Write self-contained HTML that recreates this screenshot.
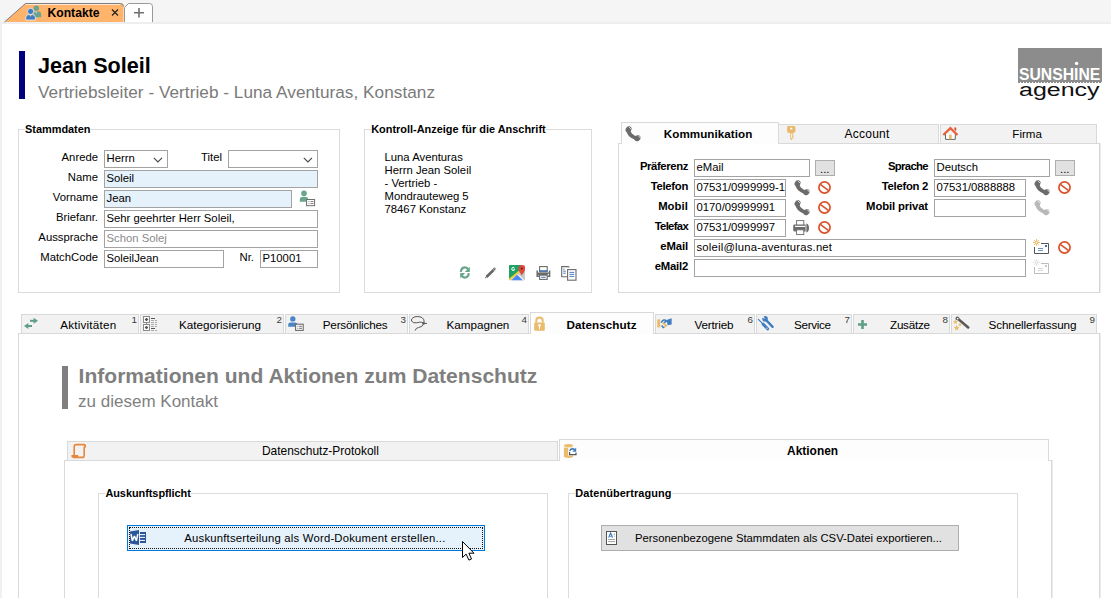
<!DOCTYPE html>
<html><head><meta charset="utf-8"><style>
html,body{margin:0;padding:0;}
body{width:1111px;height:598px;overflow:hidden;position:relative;background:#fff;font-family:"Liberation Sans", sans-serif;}
body > div, body > svg{position:absolute;box-sizing:border-box;}
</style></head><body>
<div style="left:0px;top:0px;width:1111px;height:22px;background:#f5f5f5;"></div>
<div style="left:0px;top:22px;width:1111px;height:2px;background:#eceef0;"></div>
<div style="left:0px;top:24px;width:2px;height:574px;background:#f0f0f0;"></div>
<svg style="left:0px;top:0px" width="160" height="24" viewBox="0 0 160 24">
<path d="M4.5,22 L25.5,3.5 L120.5,3.5 Q123.5,3.5 123.5,6.5 L123.5,22 Z" fill="#ffb36b"/>
<path d="M4.5,22 L25.5,3.5 L120.5,3.5 Q123.5,3.5 123.5,6.5" fill="none" stroke="#7d7d7d" stroke-width="1"/>
<path d="M26,4.5 L120,4.5" stroke="#fff" stroke-width="1" opacity="0.7"/>
<path d="M124.5,22 L124.5,7.5 L128.5,3.5 L149.5,3.5 Q152.5,3.5 152.5,6.5 L152.5,22" fill="#fff" stroke="#999" stroke-width="1"/>
<path d="M134,12.8 H144 M139,8 V17.6" stroke="#707070" stroke-width="1.6"/>
<path d="M112,9.5 L118,15.5 M118,9.5 L112,15.5" stroke="#222" stroke-width="1.2"/>
</svg>
<div style="left:47.5px;top:6.92px;font-size:12.15px;line-height:12.15px;font-weight:bold;color:#000;white-space:nowrap;">Kontakte</div>
<svg style="left:24px;top:4px" width="20" height="18" viewBox="0 0 20 18">
<circle cx="12.3" cy="4.3" r="2.7" fill="#6aa390"/>
<path d="M9.6,13.2 V10.4 Q9.6,7.4 12.3,7.4 Q15,7.4 15,7.4 Q17.2,7.6 17.2,10.4 V13.2 Z" fill="#6aa390"/>
<path d="M11.2,7.6 L12.3,9.6 L13.4,7.6 Z" fill="#fff" opacity="0.6"/>
<circle cx="6.6" cy="7.4" r="3.1" fill="#3f7cc0" stroke="#fff" stroke-width="0.7"/>
<path d="M1.8,16 V13.6 Q1.8,10.6 4.8,10.6 H8.4 Q11.4,10.6 11.4,13.6 V16 Z" fill="#3f7cc0" stroke="#fff" stroke-width="0.7"/>
<path d="M5.4,10.9 L6.6,12.8 L7.8,10.9 Z" fill="#ffb36b"/>
</svg>
<div style="left:19px;top:51px;width:6px;height:48px;background:#000080;"></div>
<div style="left:38px;top:54.52px;font-size:21.6px;line-height:21.6px;font-weight:bold;color:#000;white-space:nowrap;">Jean Soleil</div>
<div style="left:38px;top:84.44px;font-size:17.2px;line-height:17.2px;font-weight:normal;color:#7a7a7a;white-space:nowrap;letter-spacing:0.034px;">Vertriebsleiter - Vertrieb - Luna Aventuras, Konstanz</div>
<div style="left:18px;top:129px;width:322px;height:164px;border:1px solid #dcdcdc;"></div>
<div style="left:25px;top:128px;width:66px;height:3px;background:#fff;"></div>
<div style="left:25px;top:123.75px;font-size:10.93px;line-height:10.93px;font-weight:bold;color:#000;white-space:nowrap;letter-spacing:-0.007px;">Stammdaten</div>
<div style="right:1013px;top:152.23px;font-size:11.3px;line-height:11.3px;font-weight:normal;color:#000;white-space:nowrap;text-align:right;">Anrede</div>
<div style="left:104px;top:150px;width:64px;height:18px;border:1px solid #a3a3a3;background:#fff;"></div>
<div style="left:106.5px;top:153.33px;font-size:11.3px;line-height:11.3px;font-weight:normal;color:#000;white-space:nowrap;">Herrn</div>
<svg style="left:153px;top:157px" width="10" height="6" viewBox="0 0 10 6"><path d="M0.8,0.8 L4.9,4.9 L9,0.8" fill="none" stroke="#444" stroke-width="1.1"/></svg>
<div style="right:889px;top:152.23px;font-size:11.3px;line-height:11.3px;font-weight:normal;color:#000;white-space:nowrap;text-align:right;">Titel</div>
<div style="left:228px;top:150px;width:90px;height:18px;border:1px solid #a3a3a3;background:#fff;"></div>
<svg style="left:303px;top:157px" width="10" height="6" viewBox="0 0 10 6"><path d="M0.8,0.8 L4.9,4.9 L9,0.8" fill="none" stroke="#444" stroke-width="1.1"/></svg>
<div style="right:1013px;top:172.23px;font-size:11.3px;line-height:11.3px;font-weight:normal;color:#000;white-space:nowrap;text-align:right;">Name</div>
<div style="left:104px;top:170px;width:214px;height:18px;border:1px solid #a3a3a3;background:#e5f1fb;"></div>
<div style="left:106.5px;top:173.33px;font-size:11.3px;line-height:11.3px;font-weight:normal;color:#000;white-space:nowrap;">Soleil</div>
<div style="right:1013px;top:192.23px;font-size:11.3px;line-height:11.3px;font-weight:normal;color:#000;white-space:nowrap;text-align:right;">Vorname</div>
<div style="left:104px;top:190px;width:188px;height:18px;border:1px solid #a3a3a3;background:#e5f1fb;"></div>
<div style="left:106.5px;top:193.33px;font-size:11.3px;line-height:11.3px;font-weight:normal;color:#000;white-space:nowrap;">Jean</div>
<svg style="left:297px;top:189px" width="20" height="19" viewBox="0 0 20 19">
<circle cx="7" cy="4.4" r="2.8" fill="#6aa68c"/>
<path d="M2.8,12.8 L2.8,10 Q2.8,7.9 5,7.9 L9,7.9 Q11.2,7.9 11.2,10 L11.2,12.8 Z" fill="#6aa68c"/>
<rect x="9.6" y="10.5" width="8" height="6.2" fill="#fff" stroke="#6e6e6e" stroke-width="1"/>
<path d="M11.5,12.6 h0.9 M13.5,12.6 h3 M11.5,14.6 h0.9 M13.5,14.6 h3" stroke="#6e6e6e" stroke-width="0.9"/>
</svg>
<div style="right:1013px;top:212.23px;font-size:11.3px;line-height:11.3px;font-weight:normal;color:#000;white-space:nowrap;text-align:right;">Briefanr.</div>
<div style="left:104px;top:210px;width:214px;height:18px;border:1px solid #a3a3a3;background:#fff;"></div>
<div style="left:106.5px;top:213.33px;font-size:11.3px;line-height:11.3px;font-weight:normal;color:#000;white-space:nowrap;">Sehr geehrter Herr Soleil,</div>
<div style="right:1013px;top:232.23px;font-size:11.3px;line-height:11.3px;font-weight:normal;color:#000;white-space:nowrap;text-align:right;">Aussprache</div>
<div style="left:104px;top:230px;width:214px;height:18px;border:1px solid #a3a3a3;background:#fff;"></div>
<div style="left:106.5px;top:233.33px;font-size:11.3px;line-height:11.3px;font-weight:normal;color:#8a8a8a;white-space:nowrap;">Schon Solej</div>
<div style="right:1013px;top:252.23px;font-size:11.3px;line-height:11.3px;font-weight:normal;color:#000;white-space:nowrap;text-align:right;">MatchCode</div>
<div style="left:104px;top:250px;width:120px;height:18px;border:1px solid #a3a3a3;background:#fff;"></div>
<div style="left:106.5px;top:253.33px;font-size:11.3px;line-height:11.3px;font-weight:normal;color:#000;white-space:nowrap;">SoleilJean</div>
<div style="right:857px;top:252.23px;font-size:11.3px;line-height:11.3px;font-weight:normal;color:#000;white-space:nowrap;text-align:right;">Nr.</div>
<div style="left:260px;top:250px;width:58px;height:18px;border:1px solid #a3a3a3;background:#fff;"></div>
<div style="left:262.5px;top:253.33px;font-size:11.3px;line-height:11.3px;font-weight:normal;color:#000;white-space:nowrap;">P10001</div>
<div style="left:364px;top:129px;width:228px;height:164px;border:1px solid #dcdcdc;"></div>
<div style="left:371.2px;top:128px;width:175px;height:3px;background:#fff;"></div>
<div style="left:371.2px;top:123.75px;font-size:10.93px;line-height:10.93px;font-weight:bold;color:#000;white-space:nowrap;letter-spacing:0.004px;">Kontroll-Anzeige für die Anschrift</div>
<svg style="left:459px;top:266px" width="12" height="13" viewBox="0 0 12 13"><path d="M1.8,5.8 Q2.4,1.3 6.2,1.3 Q8.2,1.3 9.4,3.6" fill="none" stroke="#6aa68c" stroke-width="2.2"/>
<path d="M10.8,0.8 V5.9 H5.8 Z" fill="#6aa68c"/>
<path d="M9.8,7.2 Q9.4,11.6 5.8,11.6 Q3.8,11.6 2.6,9.4" fill="none" stroke="#6aa68c" stroke-width="2.2"/>
<path d="M1.2,7.1 H6.2 L1.2,12.2 Z" fill="#6aa68c"/></svg>
<svg style="left:484px;top:266px" width="14" height="13" viewBox="0 0 14 13"><path d="M2.4,11 L11.4,2.2" stroke="#666" stroke-width="2.6"/>
<path d="M1,12.2 L2.8,10.6" stroke="#666" stroke-width="1"/>
<path d="M9.2,3.6 L10.8,5.2 M10.4,2.4 L12,4" stroke="#fff" stroke-width="0.7"/></svg>
<svg style="left:509px;top:265px" width="16" height="16" viewBox="0 0 16 16"><rect x="0" y="0" width="16" height="15.2" rx="1" fill="#c9c9c9"/>
<path d="M1,0 H13 L10.4,6.4 L0,14.6 V1 Q0,0 1,0 Z" fill="#1ea362"/>
<path d="M0,14.8 L10.6,6.2" stroke="#f3d036" stroke-width="1.6"/>
<path d="M2.6,15.2 L8.4,9.4 L14.2,15.2 Z" fill="#4a89f3"/>
<path d="M8.6,9.4 L14.6,15.2" stroke="#f8f8f8" stroke-width="1.1"/>
<path d="M12.8,0 Q9.4,0 9.4,3.6 Q9.4,6 12.8,10.4 Q16.2,6 16.2,3.6 Q16.2,0 12.8,0 Z" fill="#dd4b3e"/>
<circle cx="12.8" cy="3.6" r="1.1" fill="#7d1a12"/>
<path d="M5.6,3.2 Q5,2.2 4,2.4 Q2.8,2.6 2.8,4 Q2.8,5.6 4.2,5.6 Q5.4,5.6 5.6,4.4 H4.4" fill="none" stroke="#fff" stroke-width="1"/></svg>
<svg style="left:536px;top:265.6px" width="16" height="15" viewBox="0 0 16 15"><g transform="scale(1.0)"><rect x="3.6" y="0.6" width="7.6" height="5.2" fill="#fff" stroke="#6b6b6b" stroke-width="1.1"/>
<rect x="3.2" y="4.2" width="8.4" height="1.5" fill="#3a72b4"/>
<path d="M1.2,4.4 V10.2 H3.4 M11.4,10.2 H13.6 V4.4" fill="none" stroke="#6b6b6b" stroke-width="1.5"/>
<path d="M1.2,7.8 H13.6" stroke="#6b6b6b" stroke-width="2.6"/>
<circle cx="12.3" cy="8.5" r="0.7" fill="#fff"/>
<rect x="3.6" y="9.2" width="7.6" height="4.2" fill="#fff" stroke="#6b6b6b" stroke-width="1.1"/>
<rect x="5.2" y="10.8" width="4.4" height="1" fill="#3a72b4"/></g></svg>
<svg style="left:561px;top:266px" width="16" height="15" viewBox="0 0 16 15"><path d="M7.4,10.8 H0.7 V0.6 H7.2 L8.4,1.4" fill="none" stroke="#6b6b6b" stroke-width="1.1"/>
<path d="M2.2,3.2 h1.4 M2.2,5.2 h2.6 M2.2,7.2 h2.6" stroke="#3a72b4" stroke-width="0.9"/>
<rect x="6.6" y="3.6" width="8.4" height="10.6" fill="#fff" stroke="#6b6b6b" stroke-width="1.1"/>
<path d="M8.4,6.4 h4.8 M8.4,8.4 h4.8 M8.4,10.4 h4.8" stroke="#3a72b4" stroke-width="0.9"/></svg>
<div style="left:384.5px;top:152.13px;font-size:11.3px;line-height:11.3px;font-weight:normal;color:#000;white-space:nowrap;">Luna Aventuras</div>
<div style="left:384.5px;top:165.03px;font-size:11.3px;line-height:11.3px;font-weight:normal;color:#000;white-space:nowrap;">Herrn Jean Soleil</div>
<div style="left:384.5px;top:177.93px;font-size:11.3px;line-height:11.3px;font-weight:normal;color:#000;white-space:nowrap;">- Vertrieb -</div>
<div style="left:384.5px;top:190.83px;font-size:11.3px;line-height:11.3px;font-weight:normal;color:#000;white-space:nowrap;">Mondrauteweg 5</div>
<div style="left:384.5px;top:203.73px;font-size:11.3px;line-height:11.3px;font-weight:normal;color:#000;white-space:nowrap;">78467 Konstanz</div>
<div style="left:618px;top:143px;width:482px;height:150px;border:1px solid #d9d9d9;border-right-color:#d5d5d5;"></div>
<div style="left:1100px;top:143px;width:1px;height:150px;background:#ececec;"></div>
<div style="left:779px;top:124px;width:160px;height:20px;background:#f2f2f2;border-top:1px solid #d9d9d9;border-right:1px solid #d9d9d9;border-bottom:1px solid #d9d9d9;"></div>
<div style="left:940px;top:124px;width:157px;height:20px;background:#f2f2f2;border:1px solid #d9d9d9;"></div>
<div style="left:621px;top:122px;width:158px;height:22px;background:#fdfdfd;border:1px solid #d9d9d9;border-bottom:none;"></div>
<svg style="left:625px;top:125.5px" width="16" height="16" viewBox="0 0 16 16"><path d="M3.4,3.6 Q3.2,9.6 12.2,12.6" fill="none" stroke="#6b6b6b" stroke-width="4.0" stroke-linecap="round"/>
<ellipse cx="3.6" cy="3.4" rx="3.3" ry="2.8" transform="rotate(-55 3.6 3.4)" fill="#6b6b6b"/>
<ellipse cx="12.4" cy="12.2" rx="3.3" ry="2.8" transform="rotate(-35 12.4 12.2)" fill="#6b6b6b"/>
<path d="M3.6,0.6 L6.6,3.6 M13.2,9.4 L15.6,12.4" stroke="#fff" stroke-width="0.8" opacity="0.9"/></svg>
<div style="left:663.8px;top:127.94px;font-size:11.65px;line-height:11.65px;font-weight:bold;color:#000;white-space:nowrap;letter-spacing:0.046px;">Kommunikation</div>
<svg style="left:786px;top:125px" width="10" height="17" viewBox="0 0 10 17"><path d="M2.2,1 H8 Q9.4,1 9.4,2.4 V6.3 Q9.4,7.5 8,7.8 L6.6,8.3 V13.6 L5.4,15.3 L4.2,13.6 V8.3 L2.6,7.8 Q1.1,7.5 1.1,6.2 V2.4 Q1.1,1 2.2,1 Z" fill="#e9b96a"/>
<rect x="4.3" y="2.7" width="2" height="1.7" fill="#fff"/>
<path d="M5.4,8.5 V13.2" stroke="#fff" stroke-width="0.8"/>
<path d="M6.6,9.8 h1.2 M6.6,11.4 h1.2 M6.6,12.9 h1.0" stroke="#e9b96a" stroke-width="0.9"/></svg>
<div style="left:844.4px;top:127.64px;font-size:12.0px;line-height:12.0px;font-weight:normal;color:#000;white-space:nowrap;letter-spacing:0.273px;">Account</div>
<svg style="left:942px;top:126px" width="17" height="15" viewBox="0 0 17 15"><path d="M3.5,8 V13.4 H13.3 V8" fill="#fff" stroke="#666" stroke-width="1"/>
<rect x="7.1" y="8.6" width="2.6" height="4.6" fill="#e9b96a"/>
<path d="M1.3,9 L8.4,2.2 L15.5,9" fill="none" stroke="#e8603c" stroke-width="2.3"/>
<path d="M12.4,1.6 H14.2 V5.2 L12.4,3.6 Z" fill="#d34a1e"/></svg>
<div style="left:1012.3px;top:127.98px;font-size:11.6px;line-height:11.6px;font-weight:normal;color:#000;white-space:nowrap;">Firma</div>
<div style="right:423px;top:161.43px;font-size:11.3px;line-height:11.3px;font-weight:bold;color:#000;white-space:nowrap;text-align:right;letter-spacing:-0.375px;">Präferenz</div>
<div style="left:694px;top:159px;width:116px;height:18px;border:1px solid #a3a3a3;background:#fff;"></div>
<div style="left:696.5px;top:162.33px;font-size:11.3px;line-height:11.3px;font-weight:normal;color:#000;white-space:nowrap;">eMail</div>
<div style="left:815px;top:160px;width:20px;height:16px;border:1px solid #adadad;background:#e1e1e1;"></div>
<div style="left:820px;top:164.03px;font-size:11.3px;line-height:11.3px;font-weight:normal;color:#000;white-space:nowrap;">...</div>
<div style="right:423px;top:181.43px;font-size:11.3px;line-height:11.3px;font-weight:bold;color:#000;white-space:nowrap;text-align:right;letter-spacing:-0.307px;">Telefon</div>
<div style="left:694px;top:179px;width:92px;height:18px;border:1px solid #a3a3a3;background:#fff;"></div>
<div style="left:696.5px;top:182.33px;font-size:11.3px;line-height:11.3px;font-weight:normal;color:#000;white-space:nowrap;">07531/0999999-1</div>
<svg style="left:794px;top:179.5px" width="16" height="16" viewBox="0 0 16 16"><path d="M3.4,3.6 Q3.2,9.6 12.2,12.6" fill="none" stroke="#6b6b6b" stroke-width="4.0" stroke-linecap="round"/>
<ellipse cx="3.6" cy="3.4" rx="3.3" ry="2.8" transform="rotate(-55 3.6 3.4)" fill="#6b6b6b"/>
<ellipse cx="12.4" cy="12.2" rx="3.3" ry="2.8" transform="rotate(-35 12.4 12.2)" fill="#6b6b6b"/>
<path d="M3.6,0.6 L6.6,3.6 M13.2,9.4 L15.6,12.4" stroke="#fff" stroke-width="0.8" opacity="0.9"/></svg>
<svg style="left:817px;top:180px" width="15" height="15" viewBox="0 0 15 15"><circle cx="7.5" cy="7.5" r="5.6" fill="none" stroke="#d9532c" stroke-width="1.7"/><path d="M3.6,4.6 L11.4,10.4" stroke="#d9532c" stroke-width="1.7"/></svg>
<div style="right:423px;top:201.43px;font-size:11.3px;line-height:11.3px;font-weight:bold;color:#000;white-space:nowrap;text-align:right;letter-spacing:0.075px;">Mobil</div>
<div style="left:694px;top:199px;width:92px;height:18px;border:1px solid #a3a3a3;background:#fff;"></div>
<div style="left:696.5px;top:202.33px;font-size:11.3px;line-height:11.3px;font-weight:normal;color:#000;white-space:nowrap;">0170/09999991</div>
<svg style="left:794px;top:199.5px" width="16" height="16" viewBox="0 0 16 16"><path d="M3.4,3.6 Q3.2,9.6 12.2,12.6" fill="none" stroke="#6b6b6b" stroke-width="4.0" stroke-linecap="round"/>
<ellipse cx="3.6" cy="3.4" rx="3.3" ry="2.8" transform="rotate(-55 3.6 3.4)" fill="#6b6b6b"/>
<ellipse cx="12.4" cy="12.2" rx="3.3" ry="2.8" transform="rotate(-35 12.4 12.2)" fill="#6b6b6b"/>
<path d="M3.6,0.6 L6.6,3.6 M13.2,9.4 L15.6,12.4" stroke="#fff" stroke-width="0.8" opacity="0.9"/></svg>
<svg style="left:817px;top:200px" width="15" height="15" viewBox="0 0 15 15"><circle cx="7.5" cy="7.5" r="5.6" fill="none" stroke="#d9532c" stroke-width="1.7"/><path d="M3.6,4.6 L11.4,10.4" stroke="#d9532c" stroke-width="1.7"/></svg>
<div style="right:423px;top:221.43px;font-size:11.3px;line-height:11.3px;font-weight:bold;color:#000;white-space:nowrap;text-align:right;letter-spacing:-0.682px;">Telefax</div>
<div style="left:694px;top:219px;width:92px;height:18px;border:1px solid #a3a3a3;background:#fff;"></div>
<div style="left:696.5px;top:222.33px;font-size:11.3px;line-height:11.3px;font-weight:normal;color:#000;white-space:nowrap;">07531/0999997</div>
<svg style="left:817px;top:220px" width="15" height="15" viewBox="0 0 15 15"><circle cx="7.5" cy="7.5" r="5.6" fill="none" stroke="#d9532c" stroke-width="1.7"/><path d="M3.6,4.6 L11.4,10.4" stroke="#d9532c" stroke-width="1.7"/></svg>
<svg style="left:792px;top:219px" width="18" height="17" viewBox="0 0 18 17"><rect x="4.6" y="1.6" width="7.2" height="5" fill="#fff" stroke="#6b6b6b" stroke-width="0.9"/>
<path d="M2.6,5.6 H13.6 V12.4 H2.6 Q1.2,12.4 1.2,11 V7 Q1.2,5.6 2.6,5.6 Z" fill="#6b6b6b"/>
<rect x="3" y="6.8" width="10.2" height="1.2" fill="#fff"/>
<path d="M14.4,4.6 Q17,5.4 17,9 Q17,12.6 14.4,13.6 Z" fill="#6b6b6b"/>
<rect x="4.6" y="10.8" width="7.2" height="4.8" fill="#fff" stroke="#6b6b6b" stroke-width="0.9"/></svg>
<div style="right:423px;top:241.43px;font-size:11.3px;line-height:11.3px;font-weight:bold;color:#000;white-space:nowrap;text-align:right;letter-spacing:-0.116px;">eMail</div>
<div style="left:694px;top:239px;width:332px;height:18px;border:1px solid #a3a3a3;background:#fff;"></div>
<div style="left:696.5px;top:242.33px;font-size:11.3px;line-height:11.3px;font-weight:normal;color:#000;white-space:nowrap;letter-spacing:0.196px;">soleil@luna-aventuras.net</div>
<svg style="left:1057px;top:240px" width="15" height="15" viewBox="0 0 15 15"><circle cx="7.5" cy="7.5" r="5.6" fill="none" stroke="#d9532c" stroke-width="1.7"/><path d="M3.6,4.6 L11.4,10.4" stroke="#d9532c" stroke-width="1.7"/></svg>
<div style="right:423px;top:261.43px;font-size:11.3px;line-height:11.3px;font-weight:bold;color:#000;white-space:nowrap;text-align:right;letter-spacing:-0.209px;">eMail2</div>
<div style="left:694px;top:259px;width:332px;height:18px;border:1px solid #a3a3a3;background:#fff;"></div>
<svg style="left:1033px;top:239px" width="17" height="16" viewBox="0 0 17 16"><path d="M8,4.5 H15.5 V14.5 H1.5 V8" fill="none" stroke="#555" stroke-width="1"/>
<rect x="12" y="6" width="2" height="2" fill="#3a6fb0"/>
<path d="M5,9.5 h5 M5,11.5 h5" stroke="#3a6fb0" stroke-width="1" opacity="0.75"/>
<circle cx="3.5" cy="3.5" r="1.3" fill="none" stroke="#f0a83c" stroke-width="1"/>
<path d="M3.5,0.2 V1.8 M3.5,5.2 V6.8 M0.2,3.5 H1.8 M5.2,3.5 H6.8 M1.2,1.2 L2.2,2.2 M4.8,4.8 L5.8,5.8 M5.8,1.2 L4.8,2.2 M2.2,4.8 L1.2,5.8" stroke="#f0a83c" stroke-width="0.9"/></svg>
<svg style="left:1033px;top:259px" width="17" height="16" viewBox="0 0 17 16"><path d="M8,4.5 H15.5 V14.5 H1.5 V8" fill="none" stroke="#bdbdbd" stroke-width="1"/>
<rect x="12" y="6" width="2" height="2" fill="#c8c8c8"/>
<path d="M5,9.5 h5 M5,11.5 h5" stroke="#c8c8c8" stroke-width="1" opacity="0.75"/>
<circle cx="3.5" cy="3.5" r="1.3" fill="none" stroke="#dedede" stroke-width="1"/>
<path d="M3.5,0.2 V1.8 M3.5,5.2 V6.8 M0.2,3.5 H1.8 M5.2,3.5 H6.8 M1.2,1.2 L2.2,2.2 M4.8,4.8 L5.8,5.8 M5.8,1.2 L4.8,2.2 M2.2,4.8 L1.2,5.8" stroke="#dedede" stroke-width="0.9"/></svg>
<div style="right:183px;top:161.43px;font-size:11.3px;line-height:11.3px;font-weight:bold;color:#000;white-space:nowrap;text-align:right;letter-spacing:-0.649px;">Sprache</div>
<div style="left:934px;top:159px;width:116px;height:18px;border:1px solid #a3a3a3;background:#fff;"></div>
<div style="left:936.5px;top:162.33px;font-size:11.3px;line-height:11.3px;font-weight:normal;color:#000;white-space:nowrap;">Deutsch</div>
<div style="left:1055px;top:160px;width:20px;height:16px;border:1px solid #adadad;background:#e1e1e1;"></div>
<div style="left:1060px;top:164.03px;font-size:11.3px;line-height:11.3px;font-weight:normal;color:#000;white-space:nowrap;">...</div>
<div style="right:183px;top:181.43px;font-size:11.3px;line-height:11.3px;font-weight:bold;color:#000;white-space:nowrap;text-align:right;letter-spacing:-0.283px;">Telefon 2</div>
<div style="left:934px;top:179px;width:92px;height:18px;border:1px solid #a3a3a3;background:#fff;"></div>
<div style="left:936.5px;top:182.33px;font-size:11.3px;line-height:11.3px;font-weight:normal;color:#000;white-space:nowrap;">07531/0888888</div>
<svg style="left:1034px;top:179.5px" width="16" height="16" viewBox="0 0 16 16"><path d="M3.4,3.6 Q3.2,9.6 12.2,12.6" fill="none" stroke="#6b6b6b" stroke-width="4.0" stroke-linecap="round"/>
<ellipse cx="3.6" cy="3.4" rx="3.3" ry="2.8" transform="rotate(-55 3.6 3.4)" fill="#6b6b6b"/>
<ellipse cx="12.4" cy="12.2" rx="3.3" ry="2.8" transform="rotate(-35 12.4 12.2)" fill="#6b6b6b"/>
<path d="M3.6,0.6 L6.6,3.6 M13.2,9.4 L15.6,12.4" stroke="#fff" stroke-width="0.8" opacity="0.9"/></svg>
<svg style="left:1057px;top:180px" width="15" height="15" viewBox="0 0 15 15"><circle cx="7.5" cy="7.5" r="5.6" fill="none" stroke="#d9532c" stroke-width="1.7"/><path d="M3.6,4.6 L11.4,10.4" stroke="#d9532c" stroke-width="1.7"/></svg>
<div style="right:183px;top:201.43px;font-size:11.3px;line-height:11.3px;font-weight:bold;color:#000;white-space:nowrap;text-align:right;letter-spacing:-0.126px;">Mobil privat</div>
<div style="left:934px;top:199px;width:92px;height:18px;border:1px solid #a3a3a3;background:#fff;"></div>
<svg style="left:1034px;top:199.5px" width="16" height="16" viewBox="0 0 16 16"><path d="M3.4,3.6 Q3.2,9.6 12.2,12.6" fill="none" stroke="#b8b8b8" stroke-width="4.0" stroke-linecap="round"/>
<ellipse cx="3.6" cy="3.4" rx="3.3" ry="2.8" transform="rotate(-55 3.6 3.4)" fill="#b8b8b8"/>
<ellipse cx="12.4" cy="12.2" rx="3.3" ry="2.8" transform="rotate(-35 12.4 12.2)" fill="#b8b8b8"/>
<path d="M3.6,0.6 L6.6,3.6 M13.2,9.4 L15.6,12.4" stroke="#fff" stroke-width="0.8" opacity="0.9"/></svg>
<div style="left:18px;top:333px;width:1082px;height:300px;border:1px solid #d9d9d9;"></div>
<div style="left:1100px;top:333px;width:1px;height:265px;background:#ececec;"></div>
<div style="left:21px;top:314px;width:118px;height:20px;background:#f2f2f2;border:1px solid #d9d9d9;"></div>
<div style="left:60.2px;top:318.50px;font-size:11.7px;line-height:11.7px;font-weight:normal;color:#000;white-space:nowrap;letter-spacing:0.208px;">Aktivitäten</div>
<div style="left:131.6px;top:314.90px;font-size:9.8px;line-height:9.8px;font-weight:normal;color:#3a3a3a;white-space:nowrap;">1</div>
<div style="left:140px;top:314px;width:144px;height:20px;background:#f2f2f2;border:1px solid #d9d9d9;"></div>
<div style="left:179px;top:318.50px;font-size:11.7px;line-height:11.7px;font-weight:normal;color:#000;white-space:nowrap;letter-spacing:0.009px;">Kategorisierung</div>
<div style="left:276.6px;top:314.90px;font-size:9.8px;line-height:9.8px;font-weight:normal;color:#3a3a3a;white-space:nowrap;">2</div>
<div style="left:285px;top:314px;width:123px;height:20px;background:#f2f2f2;border:1px solid #d9d9d9;"></div>
<div style="left:322.7px;top:318.50px;font-size:11.7px;line-height:11.7px;font-weight:normal;color:#000;white-space:nowrap;letter-spacing:-0.175px;">Persönliches</div>
<div style="left:400.6px;top:314.90px;font-size:9.8px;line-height:9.8px;font-weight:normal;color:#3a3a3a;white-space:nowrap;">3</div>
<div style="left:409px;top:314px;width:120px;height:20px;background:#f2f2f2;border:1px solid #d9d9d9;"></div>
<div style="left:446.4px;top:318.50px;font-size:11.7px;line-height:11.7px;font-weight:normal;color:#000;white-space:nowrap;letter-spacing:-0.006px;">Kampagnen</div>
<div style="left:521.6px;top:314.90px;font-size:9.8px;line-height:9.8px;font-weight:normal;color:#3a3a3a;white-space:nowrap;">4</div>
<div style="left:530px;top:312px;width:124px;height:22px;background:#fdfdfd;border:1px solid #d9d9d9;border-bottom:none;"></div>
<div style="left:566.5px;top:318.50px;font-size:11.7px;line-height:11.7px;font-weight:bold;color:#000;white-space:nowrap;letter-spacing:0.050px;">Datenschutz</div>
<div style="left:531px;top:333px;width:122px;height:1px;background:#fdfdfd;"></div>
<div style="left:655px;top:314px;width:100px;height:20px;background:#f2f2f2;border:1px solid #d9d9d9;"></div>
<div style="left:694.5px;top:318.50px;font-size:11.7px;line-height:11.7px;font-weight:normal;color:#000;white-space:nowrap;letter-spacing:-0.183px;">Vertrieb</div>
<div style="left:747.6px;top:314.90px;font-size:9.8px;line-height:9.8px;font-weight:normal;color:#3a3a3a;white-space:nowrap;">6</div>
<div style="left:756px;top:314px;width:96px;height:20px;background:#f2f2f2;border:1px solid #d9d9d9;"></div>
<div style="left:794.1px;top:318.50px;font-size:11.7px;line-height:11.7px;font-weight:normal;color:#000;white-space:nowrap;letter-spacing:-0.331px;">Service</div>
<div style="left:844.6px;top:314.90px;font-size:9.8px;line-height:9.8px;font-weight:normal;color:#3a3a3a;white-space:nowrap;">7</div>
<div style="left:853px;top:314px;width:97px;height:20px;background:#f2f2f2;border:1px solid #d9d9d9;"></div>
<div style="left:890px;top:318.50px;font-size:11.7px;line-height:11.7px;font-weight:normal;color:#000;white-space:nowrap;letter-spacing:-0.263px;">Zusätze</div>
<div style="left:942.6px;top:314.90px;font-size:9.8px;line-height:9.8px;font-weight:normal;color:#3a3a3a;white-space:nowrap;">8</div>
<div style="left:951px;top:314px;width:146px;height:20px;background:#f2f2f2;border:1px solid #d9d9d9;"></div>
<div style="left:988.5px;top:318.50px;font-size:11.7px;line-height:11.7px;font-weight:normal;color:#000;white-space:nowrap;letter-spacing:-0.111px;">Schnellerfassung</div>
<div style="left:1089.6px;top:314.90px;font-size:9.8px;line-height:9.8px;font-weight:normal;color:#3a3a3a;white-space:nowrap;">9</div>
<svg style="left:23px;top:317px" width="16" height="13" viewBox="0 0 16 13"><path d="M7,3.8 H12" stroke="#5e9e85" stroke-width="2"/><path d="M10.6,0.8 L15,3.8 L10.6,6.8 Z" fill="#5e9e85"/>
<path d="M9,9 H4.4" stroke="#5e9e85" stroke-width="2"/><path d="M5.4,6 L1,9 L5.4,12 Z" fill="#5e9e85"/></svg>
<svg style="left:142px;top:315px" width="17" height="17" viewBox="0 0 17 17"><rect x="1.5" y="1.5" width="6" height="6" fill="#fff" stroke="#8a8a8a" stroke-width="1"/>
<rect x="1.5" y="9.5" width="6" height="6" fill="#fff" stroke="#8a8a8a" stroke-width="1"/>
<path d="M4.5,7.5 V9.5" stroke="#8a8a8a" stroke-width="1"/>
<path d="M2.9,4.5 h3.2 M4.5,2.9 v3.2 M2.9,12.5 h3.2 M4.5,10.9 v3.2" stroke="#555" stroke-width="1.3"/>
<path d="M9,3.5 h4 M9,13.5 h4" stroke="#555" stroke-width="1"/>
<path d="M9,5.5 h3 M13,5.5 h2 M9,7.5 h3 M13,7.5 h2 M9,9.5 h3 M13,9.5 h2 M9,11.5 h3 M13,11.5 h2 M9,15.5 h3 M13,15.5 h2" stroke="#aaa" stroke-width="1"/></svg>
<svg style="left:287px;top:315px" width="17" height="17" viewBox="0 0 17 17"><circle cx="5.8" cy="3.9" r="2.7" fill="#4a86c5"/>
<path d="M1.2,11.8 V9.8 Q1.2,7.4 3.4,7.4 L8.2,7.4 Q10.4,7.4 10.4,9.8 V11.8 Z" fill="#4a86c5"/>
<rect x="8.6" y="9.2" width="7.6" height="6.2" fill="#fff" stroke="#6b6b6b" stroke-width="1.1"/>
<path d="M10.4,11.3 h0.9 M12.2,11.3 h2.6 M10.4,13.3 h0.9 M12.2,13.3 h2.6" stroke="#555" stroke-width="0.9"/></svg>
<svg style="left:410px;top:315px" width="18" height="17" viewBox="0 0 18 17"><path d="M13.8,8.4 Q15.2,3.2 10,1.8 Q4,0.8 1.6,4 Q0.6,6.6 3.6,7.6 Q6.4,8.2 9.4,7.2 Q12,6.8 13.8,8.4 Q12.6,12.2 8.4,12.6 Q6,12.8 5,15.6 M13.6,8.4 L17,8.4" fill="none" stroke="#555" stroke-width="1"/>
<circle cx="13.6" cy="8.4" r="1.2" fill="#555"/></svg>
<svg style="left:533px;top:316px" width="13" height="16" viewBox="0 0 13 16"><path d="M3.3,6.6 V4.6 Q3.3,1.4 6.5,1.4 Q9.7,1.4 9.7,4.6 V6.6" fill="none" stroke="#e9bb6b" stroke-width="2"/>
<rect x="1.2" y="6.4" width="10.6" height="8.4" rx="1.2" fill="#e9bb6b"/>
<circle cx="6.5" cy="9.4" r="1.3" fill="#fff"/><rect x="6" y="9.6" width="1" height="3.6" fill="#fff"/></svg>
<svg style="left:656px;top:317px" width="17" height="13" viewBox="0 0 17 13"><rect x="1.2" y="2.4" width="3" height="8" fill="#e9bb6b"/>
<path d="M5.2,5.6 Q7.5,1.4 10.6,4 L7.6,6.2" fill="none" stroke="#3f7cc0" stroke-width="1.6"/>
<path d="M6.8,6 L10.2,8.6 L8.2,10.4" fill="none" stroke="#e9bb6b" stroke-width="1.8"/>
<path d="M5.6,8.4 L7.8,11" stroke="#3f7cc0" stroke-width="1.6"/>
<path d="M10.6,3 L15.6,1.2 V7.4 L11.6,8.2 Z" fill="#3f7cc0"/></svg>
<svg style="left:757px;top:315px" width="18" height="17" viewBox="0 0 18 17">
<path d="M9.4,5.4 L15.6,11.8" stroke="#3f7cc0" stroke-width="2.4" stroke-linecap="round"/>
<circle cx="8" cy="3.8" r="2.8" fill="#3f7cc0"/>
<path d="M8.2,4 L5.8,0 L3.6,2 Z" fill="#f2f2f2"/>
<path d="M1.4,4.4 L5.8,8.8" stroke="#3f7cc0" stroke-width="1.2" stroke-linecap="round"/>
<path d="M6.2,9.2 L10.6,13.8" stroke="#3f7cc0" stroke-width="3" stroke-linecap="round"/>
<circle cx="10" cy="13.2" r="0.6" fill="#fff"/>
</svg>
<svg style="left:857px;top:319px" width="11" height="11" viewBox="0 0 11 11"><path d="M5.5,1 V10 M1,5.5 H10" stroke="#5e9e85" stroke-width="2.6"/></svg>
<svg style="left:952px;top:315px" width="18" height="17" viewBox="0 0 18 17"><path d="M5.6,3.6 L16.2,12.4" stroke="#5a5a5a" stroke-width="2.6" stroke-linecap="round"/>
<circle cx="5.4" cy="3.4" r="1.9" fill="#5a5a5a"/><circle cx="5.6" cy="3.6" r="0.9" fill="#fff"/>
<path d="M3.40,4.50 L4.11,6.03 L5.78,6.23 L4.54,7.37 L4.87,9.02 L3.40,8.20 L1.93,9.02 L2.26,7.37 L1.02,6.23 L2.69,6.03 Z" fill="#eabd68"/>
<path d="M4.60,10.10 L5.42,11.87 L7.36,12.10 L5.93,13.43 L6.30,15.35 L4.60,14.40 L2.90,15.35 L3.27,13.43 L1.84,12.10 L3.78,11.87 Z" fill="#eabd68"/>
<circle cx="8" cy="9.8" r="1.3" fill="#eabd68"/></svg>
<div style="left:62px;top:366px;width:6px;height:43px;background:#7f7f7f;"></div>
<div style="left:78.6px;top:365.27px;font-size:21.06px;line-height:21.06px;font-weight:bold;color:#7f7f7f;white-space:nowrap;">Informationen und Aktionen zum Datenschutz</div>
<div style="left:78px;top:393.09px;font-size:17.02px;line-height:17.02px;font-weight:normal;color:#7f7f7f;white-space:nowrap;">zu diesem Kontakt</div>
<div style="left:64px;top:460px;width:988px;height:200px;border:1px solid #d9d9d9;"></div>
<div style="left:1052px;top:460px;width:1px;height:138px;background:#ececec;"></div>
<div style="left:67px;top:441px;width:491px;height:20px;background:#f2f2f2;border:1px solid #d9d9d9;"></div>
<div style="left:559px;top:439px;width:490px;height:22px;background:#fdfdfd;border:1px solid #d9d9d9;border-bottom:none;"></div>
<div style="left:560px;top:460px;width:488px;height:1px;background:#fdfdfd;"></div>
<div style="left:261.9px;top:445.88px;font-size:11.96px;line-height:11.96px;font-weight:normal;color:#000;white-space:nowrap;letter-spacing:0.003px;">Datenschutz-Protokoll</div>
<div style="left:787.1px;top:445.51px;font-size:11.92px;line-height:11.92px;font-weight:bold;color:#000;white-space:nowrap;letter-spacing:0.009px;">Aktionen</div>
<svg style="left:70px;top:443px" width="17" height="16" viewBox="0 0 17 16"><path d="M4.2,12.2 V3.6 Q4.2,1.6 6.2,1.6 H13.8 Q15.4,1.6 15.4,3.2 Q15.4,4.2 14.2,4.4 V12.4 Q14.2,14.4 12.2,14.4 H3.2" fill="none" stroke="#e8873a" stroke-width="1.6"/>
<path d="M1.4,12 H8.2 V14.8 H3 Q1.4,14.8 1.4,13.4 Z" fill="#e8873a"/>
<path d="M13.2,1.6 h2 v2.2" fill="#e8873a"/></svg>
<svg style="left:562px;top:443px" width="16" height="16" viewBox="0 0 16 16"><ellipse cx="6.5" cy="2.4" rx="4.6" ry="1.5" fill="#e9bb6b"/>
<path d="M1.9,4.6 H11.1 V13.6 Q11.1,15 6.5,15 Q1.9,15 1.9,13.6 Z" fill="#e9bb6b"/>
<rect x="6.2" y="4.6" width="9" height="8" fill="#fdfdfd"/>
<path d="M7.6,9 V11.6 H14 V9.4" fill="none" stroke="#555" stroke-width="1.2"/>
<path d="M7.6,7.8 Q9.4,4.8 12.8,6.6" fill="none" stroke="#3f7cc0" stroke-width="1.6"/>
<path d="M14.2,4.6 V8.8 L10.4,8.8 Z" fill="#3f7cc0"/></svg>
<div style="left:98px;top:493px;width:450px;height:208px;border:1px solid #dcdcdc;"></div>
<div style="left:105.4px;top:492px;width:86px;height:3px;background:#fff;"></div>
<div style="left:105.4px;top:487.75px;font-size:10.93px;line-height:10.93px;font-weight:bold;color:#000;white-space:nowrap;letter-spacing:-0.045px;">Auskunftspflicht</div>
<div style="left:568px;top:493px;width:450px;height:208px;border:1px solid #dcdcdc;"></div>
<div style="left:575.3px;top:492px;width:96.7px;height:3px;background:#fff;"></div>
<div style="left:575.3px;top:487.75px;font-size:10.93px;line-height:10.93px;font-weight:bold;color:#000;white-space:nowrap;letter-spacing:0.102px;">Datenübertragung</div>
<div style="left:127px;top:525px;width:358px;height:26px;border:1px solid #0078d7;background:#e5f1fb;"></div>
<div style="left:129px;top:527px;width:354px;height:22px;border:1px dotted #111;"></div>
<div style="left:184.3px;top:533.23px;font-size:11.3px;line-height:11.3px;font-weight:normal;color:#000;white-space:nowrap;letter-spacing:0.209px;">Auskunftserteilung als Word-Dokument erstellen...</div>
<svg style="left:128px;top:528px" width="20" height="19" viewBox="0 0 20 19"><rect x="12" y="4" width="6" height="11" fill="#2b579a"/>
<path d="M12,6.6 h5 M12,9.4 h5 M12,12.4 h5" stroke="#fff" stroke-width="1"/>
<path d="M2,3.6 L11,2 V17 L2,15.4 Z" fill="#2b579a"/>
<path d="M3,6 L4.4,12.8 L6.4,8 L8.4,12.8 L9.8,6" fill="none" stroke="#fff" stroke-width="1.5" stroke-linejoin="bevel"/></svg>
<div style="left:601px;top:525px;width:358px;height:26px;border:1px solid #adadad;background:#e1e1e1;"></div>
<div style="left:635px;top:533.23px;font-size:11.3px;line-height:11.3px;font-weight:normal;color:#000;white-space:nowrap;letter-spacing:-0.013px;">Personenbezogene Stammdaten als CSV-Datei exportieren...</div>
<svg style="left:604px;top:529px" width="14" height="17" viewBox="0 0 14 17"><rect x="2.5" y="2.5" width="10" height="13" fill="#fff" stroke="#555" stroke-width="1"/>
<path d="M4.6,8.6 L6.6,4 L8.6,8.6" fill="none" stroke="#3f7cc0" stroke-width="1.1"/>
<circle cx="6.6" cy="6.6" r="1.1" fill="none" stroke="#3f7cc0" stroke-width="0.9"/>
<path d="M9.6,5.2 h1.4 M10,7.2 h0.8" stroke="#777" stroke-width="0.8"/>
<path d="M4,10.5 h7 M4,12.5 h7" stroke="#999" stroke-width="0.9"/></svg>
<svg style="left:461px;top:540px" width="16" height="23" viewBox="0 0 16 23"><path d="M1.5,1.5 L1.5,17.5 L5.1,14.1 L7.9,20.1 L10.5,19 L7.9,13.2 L13,13.2 Z" fill="#fff" stroke="#000" stroke-width="1" stroke-linejoin="miter"/></svg>
<div style="left:1018px;top:48px;width:84px;height:35px;background:#8c8c8c;"></div>
<div style="left:1019.4px;top:67.06px;font-size:16px;line-height:16px;font-weight:bold;color:#fff;white-space:nowrap;transform:scaleX(0.983);transform-origin:0 0;">SUNSHINE</div>
<svg style="left:1074px;top:60px" width="6" height="6" viewBox="0 0 6 6"><circle cx="2.6" cy="3.4" r="1.7" fill="#fff"/></svg>
<div style="left:1018px;top:82px;width:84px;height:1px;background:repeating-linear-gradient(90deg,#8c8c8c 0 2px,#fff 2px 3px);"></div>
<div style="left:1019.4px;top:80.15px;font-size:19.2px;line-height:19.2px;font-weight:normal;color:#111;white-space:nowrap;transform:scaleX(1.303);transform-origin:0 0;">agency</div>
</body></html>
